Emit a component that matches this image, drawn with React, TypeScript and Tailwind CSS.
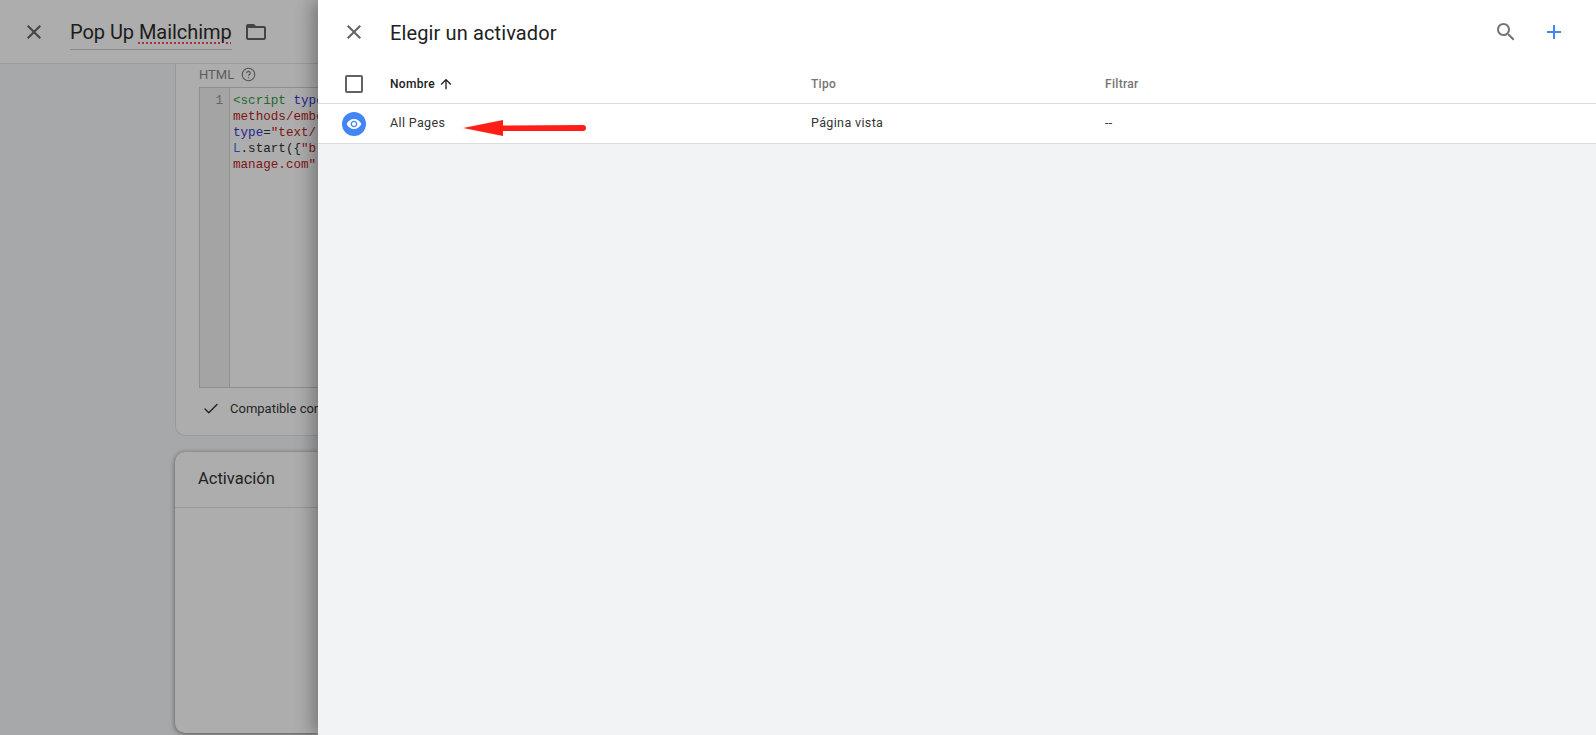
import React from 'react';
import { Check, CircleHelp } from 'lucide-react';

// Material icon paths, the lucide ones are too thin for this UI
const Icon = ({ d, className }: { d: string; className?: string }) => (
  <svg viewBox="0 0 24 24" fill="currentColor" className={className}>
    <path d={d} />
  </svg>
);

const CLOSE = 'M19 6.41L17.59 5 12 10.59 6.41 5 5 6.41 10.59 12 5 17.59 6.41 19 12 13.41 17.59 19 19 17.59 13.41 12z';
const SEARCH = 'M15.5 14h-.79l-.28-.27C15.41 12.59 16 11.11 16 9.5 16 5.91 13.09 3 9.5 3S3 5.91 3 9.5 5.91 16 9.5 16c1.61 0 3.09-.59 4.23-1.57l.27.28v.79l5 4.99L20.49 19l-4.99-5zm-6 0C7.01 14 5 11.99 5 9.5S7.01 5 9.5 5 14 7.01 14 9.5 11.99 14 9.5 14z';
const PLUS = 'M19 13h-6v6h-2v-6H5v-2h6V5h2v6h6v2z';
const EYE = 'M12 4.5C7 4.5 2.73 7.61 1 12c1.73 4.39 6 7.5 11 7.5s9.27-3.11 11-7.5c-1.73-4.39-6-7.5-11-7.5zM12 17c-2.76 0-5-2.24-5-5s2.24-5 5-5 5 2.24 5 5-2.24 5-5 5zm0-8c-1.66 0-3 1.34-3 3s1.34 3 3 3 3-1.34 3-3-1.34-3-3-3z';
const ARROW_UP = 'M4 12l1.41 1.41L11 7.83V20h2V7.83l5.58 5.59L20 12l-8-8-8 8z';
const FOLDER = 'M20 6h-8l-2-2H4c-1.1 0-1.99.9-1.99 2L2 18c0 1.1.9 2 2 2h16c1.1 0 2-.9 2-2V8c0-1.1-.9-2-2-2zm0 12H4V8h16v10z';

const codeLines = [
  <>
    <span className="text-[#1f6b2f]">&lt;script </span>
    <span className="text-[#25258f]">type</span>
  </>,
  <span className="text-[#7d1414]">methods/embe</span>,
  <>
    <span className="text-[#25258f]">type</span>
    <span className="text-[#222]">=</span>
    <span className="text-[#7d1414]">"text/</span>
  </>,
  <>
    <span className="text-[#1f4f94]">L</span>
    <span className="text-[#222]">.start({'{'}</span>
    <span className="text-[#7d1414]">"b</span>
  </>,
  <span className="text-[#7d1414]">manage.com"</span>,
];

const Background = () => (
  <div className="flex h-full w-[318px] flex-col overflow-hidden bg-[#a6a8aa]">
    <header className="flex h-[64px] shrink-0 items-center border-b border-[#9c9c9c] bg-[#adadad] pl-[22px]">
      <Icon d={CLOSE} className="h-[24px] w-[24px] shrink-0 text-[#444]" />
      <div className="ml-[24px] mt-[5px] shrink-0 border-b border-[#8c8c8c] pb-[2px]">
        <span className="text-[20px] leading-[29px] tracking-[-0.05px] text-[#1c1c1c]">
          Pop Up <span className="underline decoration-dotted decoration-[#a5333f] decoration-2 underline-offset-[3px]">Mailchimp</span>
        </span>
      </div>
      <Icon d={FOLDER} className="ml-[12px] h-[24px] w-[24px] shrink-0 text-[#444]" />
    </header>
    <div className="flex flex-1 flex-col gap-[16px] overflow-hidden pl-[175px]">
      <section className="h-[372px] w-[143px] shrink-0 overflow-hidden rounded-bl-[10px] border-b border-l border-[#9a9a9a] bg-[#adadad] pl-[23px]">
        <div className="flex h-[23px] items-center gap-[7px] pb-[2px] text-[13px] text-[#5c5c5c]">
          HTML
          <CircleHelp className="h-[15px] w-[15px] text-[#555]" strokeWidth={1.8} />
        </div>
        <div className="flex h-[301px] w-[200px] border border-[#8f8f8f]">
          <div className="w-[30px] shrink-0 border-r border-[#8f8f8f] bg-[#a4a4a4] pr-[6px] pt-[5px] text-right font-['Liberation_Mono',monospace] text-[12.6px] leading-[16px] text-[#666]">
            1
          </div>
          <div className="whitespace-nowrap pl-[3px] pt-[5px] font-['Liberation_Mono',monospace] text-[12.6px] leading-[16px]">
            {codeLines.map((line, i) => (
              <div key={i}>{line}</div>
            ))}
          </div>
        </div>
        <div className="mt-[11px] flex items-center whitespace-nowrap text-[13px] text-[#262626]">
          <Check className="ml-[3px] h-[18px] w-[18px] shrink-0 text-[#1f1f1f]" strokeWidth={1.8} />
          <span className="ml-[10px]">Compatible con</span>
        </div>
      </section>
      <section className="h-[281px] w-[143px] shrink-0 rounded-l-[10px] bg-[#adadad] shadow-[0_1px_5px_rgba(0,0,0,0.5)]">
        <div className="flex h-[56px] items-center border-b border-[#979797] pl-[23px] text-[16.5px] text-[#222]">
          Activación
        </div>
      </section>
    </div>
  </div>
);

const Panel = () => (
  <aside className="absolute inset-y-0 right-0 flex w-[1278px] flex-col bg-[#f1f3f4] shadow-[-6px_0_16px_rgba(0,0,0,0.3)]">
    <div className="flex h-[64px] shrink-0 items-center bg-white pl-[24px] pr-[30px]">
      <Icon d={CLOSE} className="h-[24px] w-[24px] text-[#5f6368]" />
      <h1 className="ml-[24px] mt-[1px] flex-1 text-[20px] tracking-[0.12px] text-[#212121]">Elegir un activador</h1>
      <Icon d={SEARCH} className="h-[24px] w-[24px] text-[#757575]" />
      <Icon d={PLUS} className="ml-[24px] h-[24px] w-[24px] text-[#4285f4]" />
    </div>
    <div className="flex h-[40px] shrink-0 items-center border-b border-[#dadce0] bg-white pt-[1px] text-[12px] tracking-[0.3px]">
      <div className="ml-[27px] h-[18px] w-[18px] rounded-[2px] border-2 border-[#5f6368]" />
      <div className="ml-[27px] flex w-[421px] items-center gap-[3px] font-medium text-[#212121]">
        Nombre
        <Icon d={ARROW_UP} className="h-[16px] w-[16px]" />
      </div>
      <div className="w-[294px] font-medium text-[#757575]">Tipo</div>
      <div className="font-medium text-[#757575]">Filtrar</div>
    </div>
    <div className="flex h-[40px] shrink-0 items-center border-b border-[#dadce0] bg-white text-[12.5px] tracking-[0.36px] text-[#333]">
      <div className="ml-[24px] flex h-[24px] w-[24px] items-center justify-center rounded-full bg-[#4285f4]">
        <Icon d={EYE} className="h-[16px] w-[16px] text-white" />
      </div>
      <div className="ml-[24px] w-[421px]">All Pages</div>
      <div className="w-[294px]">Página vista</div>
      <div>--</div>
    </div>
    {/* annotation arrow */}
    <svg className="absolute left-[143px] top-[118px]" width="127" height="20" viewBox="0 0 127 20" fill="none">
      <path d="M2 10 L42 2 L42 7.5 L122 7 Q125 7 125 10 Q125 13 122 13 L42 13 L42 18 Z" fill="#ff1f17" />
    </svg>
  </aside>
);

export default function App() {
  return (
    <div className="relative h-[735px] w-[1596px] overflow-hidden bg-[#a6a8aa] font-['Roboto',sans-serif]">
      <Background />
      <Panel />
    </div>
  );
}
